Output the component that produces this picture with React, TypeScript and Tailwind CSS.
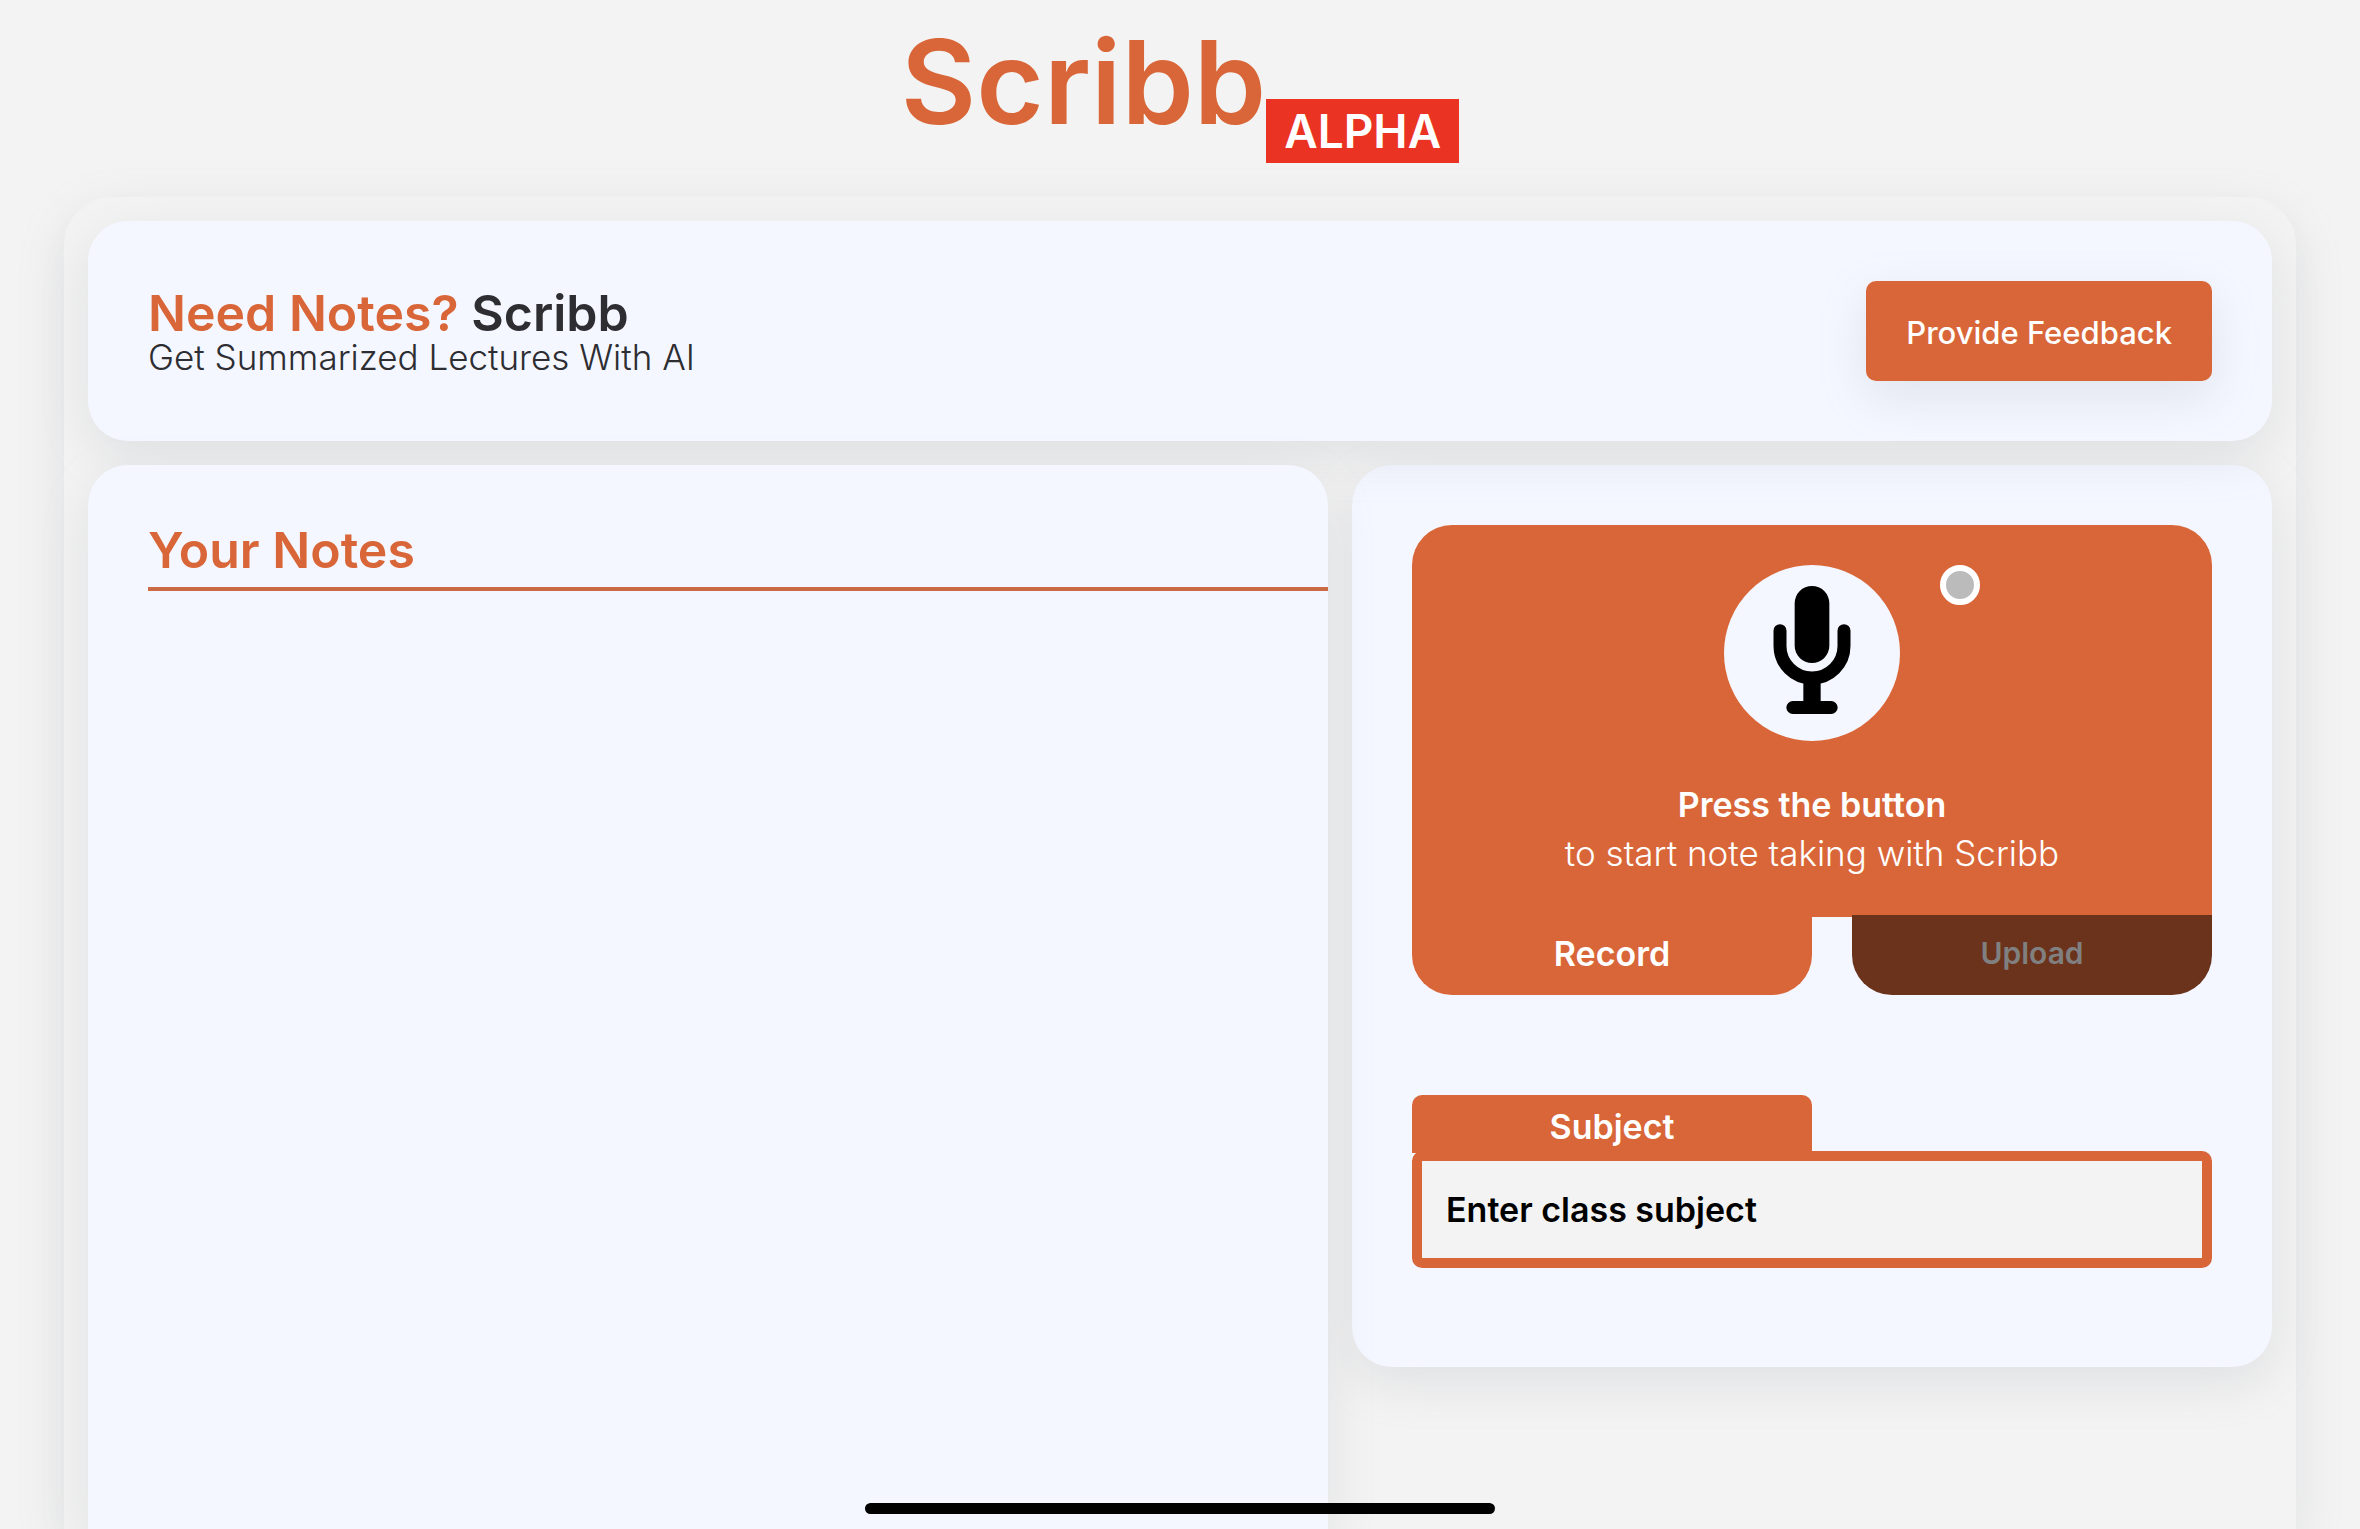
import { useState } from "react";

function MicIcon() {
  return (
    <svg viewBox="0 0 232 384" className="h-32 w-[78px]" fill="none" aria-hidden="true">
      <rect x="64" y="0" width="104" height="231" rx="52" fill="black" />
      <path
        d="M20 134V180a96 96 0 0 0 192 0V134"
        stroke="black"
        strokeWidth="39"
        strokeLinecap="round"
      />
      <path d="M90 275h52v72H90z" fill="black" />
      <rect x="39" y="345" width="154" height="39" rx="19.5" fill="black" />
    </svg>
  );
}

function SiteHeader() {
  return (
    <header className="flex h-[197px] shrink-0 items-start justify-center">
      <h1 className="pt-4 text-[116px] leading-[132px] font-semibold text-[#d96638]">Scribb</h1>
      <span className="mt-[99px] bg-[#ea3323] px-[18px] text-[46px] leading-[64px] font-semibold text-white">
        ALPHA
      </span>
    </header>
  );
}

function Banner() {
  return (
    <section className="relative z-10 col-span-2 flex items-center justify-between rounded-[40px] bg-[#f4f7ff] p-[60px] shadow-[0_16px_48px_rgba(149,157,165,0.2)]">
      <div className="text-[#2d2d32]">
        <h2 className="text-[50px] leading-[52px] font-semibold">
          <span className="text-[#d96638]">Need Notes?</span> Scribb
        </h2>
        <p className="text-[35px] leading-[36px] font-light">Get Summarized Lectures With AI</p>
      </div>
      <button
        type="button"
        className="h-[100px] rounded-[10px] bg-[#d96638] px-10 pt-1 text-[31px] font-medium text-white shadow-[0_16px_48px_rgba(149,157,165,0.2)]"
      >
        Provide Feedback
      </button>
    </section>
  );
}

function Notes() {
  return (
    <section className="relative z-20 rounded-t-[40px] bg-[#f4f7ff] pt-[60px] pl-[60px] shadow-[0_16px_48px_rgba(149,157,165,0.2)]">
      <h2 className="border-b-4 border-[#cb6b45] pb-3 text-[50px] leading-[50px] font-semibold text-[#d96638]">
        Your Notes
      </h2>
    </section>
  );
}

function Recorder() {
  const [subject, setSubject] = useState("");
  return (
    <section className="self-start rounded-[40px] bg-[#f4f7ff] px-[60px] pt-[60px] pb-[99px] shadow-[0_16px_48px_rgba(149,157,165,0.2)]">
      <div className="rounded-t-[40px] bg-[#d96638] pt-10 pb-10 text-center text-white">
        <div className="grid grid-cols-[1fr_176px_1fr] gap-10">
          <button
            type="button"
            aria-label="Start recording"
            className="col-start-2 flex size-44 items-center justify-center rounded-full bg-[#f4f7ff] pb-1.5"
          >
            <MicIcon />
          </button>
          <span
            role="status"
            aria-label="Not recording"
            className="size-10 rounded-full border-[6px] border-white bg-[#bbbbbb]"
          />
        </div>
        <p className="mt-10 text-[34px] leading-[48px] font-semibold">Press the button</p>
        <p className="text-[35px] leading-[48px] font-light">to start note taking with Scribb</p>
      </div>
      <div className="-mt-0.5 flex justify-between">
        <button
          type="button"
          className="h-20 w-1/2 rounded-b-[40px] bg-[#d96638] pb-1 text-[34px] font-semibold text-white"
        >
          Record
        </button>
        <button
          type="button"
          className="h-20 w-[45%] rounded-b-[40px] bg-[#6b321c] pb-1 text-[30px] font-semibold text-[#808080]"
        >
          Upload
        </button>
      </div>
      <div className="mt-[100px]">
        <label
          htmlFor="subject"
          className="block h-[58px] w-1/2 rounded-t-[10px] bg-[#d96638] text-center text-[34px] leading-[64px] font-semibold text-white"
        >
          Subject
        </label>
        <input
          id="subject"
          type="text"
          value={subject}
          onChange={(e) => setSubject(e.target.value)}
          placeholder="Enter class subject"
          className="-mt-0.5 block h-[117px] w-full rounded-[10px] border-[10px] border-[#d96638] bg-[#f3f3f3] px-6 text-[34px] font-semibold text-black placeholder:text-black"
        />
      </div>
    </section>
  );
}

export default function App() {
  return (
    <div className="relative flex h-screen flex-col overflow-hidden bg-[#f3f3f3] font-['Inter',sans-serif]">
      <SiteHeader />
      <main className="mx-16 grid flex-1 grid-cols-[31fr_23fr] grid-rows-[auto_1fr] gap-6 rounded-t-[48px] px-6 pt-6 shadow-[0_16px_48px_rgba(149,157,165,0.2)]">
        <Banner />
        <Notes />
        <Recorder />
      </main>
      <div className="absolute inset-x-0 bottom-[15px] z-30 mx-auto h-[11px] w-[630px] rounded-full bg-black" />
    </div>
  );
}
